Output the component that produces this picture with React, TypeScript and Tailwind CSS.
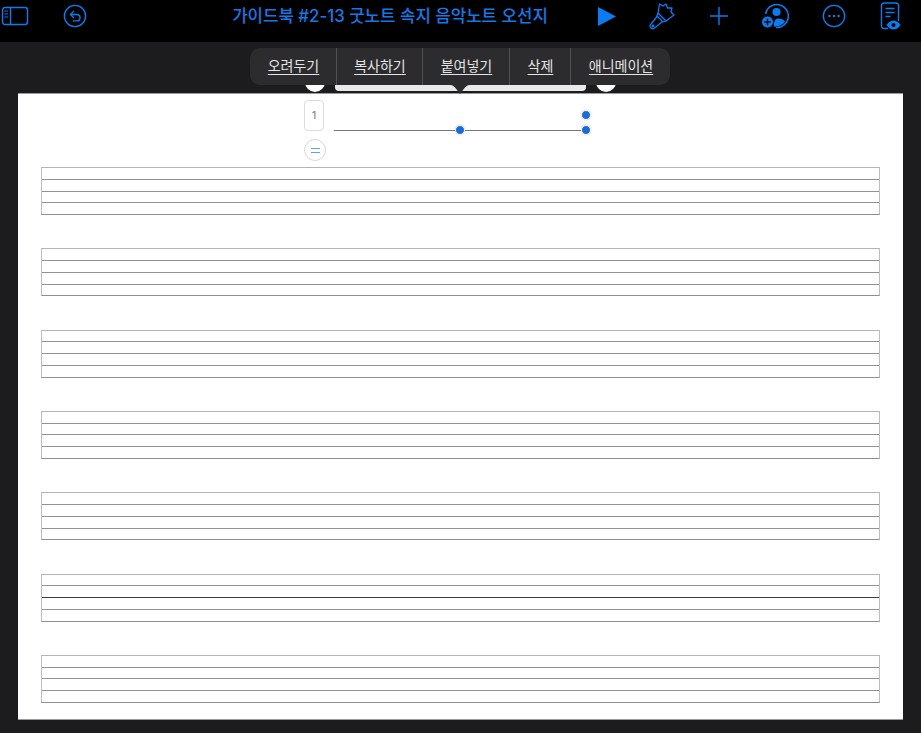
import React from "react";

const BLUE = "#0a7bf0";

const IconButton = ({ children, className = "" }: { children: React.ReactNode; className?: string }) => (
  <div className={`flex items-center justify-center ${className}`}>{children}</div>
);

const TopBar = () => (
  <div className="flex h-[42px] items-center bg-black pb-[10px] text-[#1479e6]">
    <IconButton className="ml-[1px] w-[28px]">
      <svg width="28" height="20" viewBox="0 0 28 20" fill="none" stroke={BLUE} strokeWidth="1.4">
        <rect x="1.5" y="1.5" width="25" height="17" rx="2.5" />
        <path d="M9.5 1.5v17" />
        <path d="M3.5 5h3.5M3.5 8h3.5M3.5 11h3.5" strokeWidth="1.2" />
      </svg>
    </IconButton>
    <IconButton className="ml-[34px] w-[24px]">
      <svg width="24" height="24" viewBox="0 0 24 24" fill="none" stroke={BLUE} strokeWidth="1.4">
        <circle cx="12" cy="12" r="10.6" />
        <path d="M10.5 7.5 7.500 10.500l3 3" strokeLinecap="round" strokeLinejoin="round" />
        <path d="M7.800 10.500h6a3.200 3.200 0 0 1 0 6.400h-3.600" strokeLinecap="round" />
      </svg>
    </IconButton>
    <div className="ml-[138px] w-[330px] whitespace-nowrap text-center text-[16.8px] font-medium leading-none text-[#1479e6]">
      가이드북 #2-13 굿노트 속지 음악노트 오선지
    </div>
    <IconButton className="ml-[43px] w-[18px]">
      <svg width="18" height="19" viewBox="0 0 18 19" fill={BLUE}>
        <path d="M0 0 18 9.500 0 19z" />
      </svg>
    </IconButton>
    <IconButton className="ml-[33px] w-[26px]">
      <svg width="26" height="28" viewBox="0 0 26 28" fill="none" stroke={BLUE} strokeWidth="1.3" strokeLinejoin="round">
        <path d="M10.500 2 14 4l3-2 1.500 4H23l-1 4 3 3-8 6-8-8z" />
        <path d="M9 11l-1 3 6 6 3-1" />
        <path d="M8.500 14 2 22a2.400 2.400 0 0 0 3.500 4l8-6.500" />
        <circle cx="4" cy="24" r="0.800" />
      </svg>
    </IconButton>
    <IconButton className="ml-[34px] w-[20px]">
      <svg width="20" height="20" viewBox="0 0 20 20" stroke={BLUE} strokeWidth="1.4">
        <path d="M10 1v18M1 10h18" />
      </svg>
    </IconButton>
    <IconButton className="ml-[32px] w-[28px]">
      <svg width="28" height="26" viewBox="0 0 28 26" fill="none">
        <path d="M4.500 11A11.500 11.500 0 1 1 15 24.500" stroke={BLUE} strokeWidth="1.500" />
        <circle cx="15.500" cy="9" r="4" fill={BLUE} />
        <path d="M13 23.800c-.5-4 .500-8 4-8.200 3.500 0 5.500 1 7 3-1.800 2.800-5 5-11 5.200z" fill={BLUE} />
        <circle cx="6.500" cy="19" r="6" fill={BLUE} stroke="#000" strokeWidth="1" />
        <path d="M6.500 15.800v6.400M3.300 19h6.400" stroke="#000" strokeWidth="1.400" />
      </svg>
    </IconButton>
    <IconButton className="ml-[33px] w-[24px]">
      <svg width="24" height="24" viewBox="0 0 24 24" fill="none">
        <circle cx="12" cy="12" r="10.700" stroke={BLUE} strokeWidth="1.300" />
        <circle cx="7.400" cy="12" r="1.200" fill={BLUE} />
        <circle cx="12" cy="12" r="1.200" fill={BLUE} />
        <circle cx="16.600" cy="12" r="1.200" fill={BLUE} />
      </svg>
    </IconButton>
    <IconButton className="ml-[34px] w-[24px]">
      <svg width="24" height="28" viewBox="0 0 24 28" fill="none">
        <path d="M8 26.500H4A2.500 2.500 0 0 1 1.500 24V3.500A2.500 2.500 0 0 1 4 1h12a2.500 2.500 0 0 1 2.500 2.500V19" stroke={BLUE} strokeWidth="1.400" />
        <path d="M5.500 6.500h9M5.500 10.500h9M5.500 14.500h5" stroke={BLUE} strokeWidth="1.300" />
        <path d="M6.500 23c2-3 4.500-4.500 7-4.500s5 1.500 7 4.500c-2 3-4.500 4.500-7 4.500s-5-1.500-7-4.500z" fill={BLUE} />
        <circle cx="13.500" cy="23" r="2" fill="#000" />
      </svg>
    </IconButton>
  </div>
);

const menuItems = [
  { label: "오려두기", width: "w-[87px]" },
  { label: "복사하기", width: "w-[86px]" },
  { label: "붙여넣기", width: "w-[87px]" },
  { label: "삭제", width: "w-[61px]" },
  { label: "애니메이션", width: "w-[99px]" },
];

const Popover = () => (
  <div className="absolute left-[250px] top-[48px] z-20">
    <div className="flex h-[37px] w-[420px] items-center rounded-[10px] bg-[#2c2c2e]">
      {menuItems.map((item, index) => (
        <div
          key={item.label}
          className={`flex h-full items-center justify-center border-[#505052] pb-[2px] pl-[1px] text-[14px] leading-none text-[#e4e4e4] underline underline-offset-[3px] ${item.width} ${
            index < menuItems.length - 1 ? "border-r" : ""
          }`}
        >
          {item.label}
        </div>
      ))}
    </div>
  </div>
);

// selection peeking out from under the popover
const SelectionBits = () => (
  <>
    <div className="absolute left-[305px] top-[72px] z-10 h-[20px] w-[20px] rounded-full bg-white" />
    <div className="absolute left-[596px] top-[72px] z-10 h-[20px] w-[20px] rounded-full bg-white" />
    <div className="absolute left-[335px] top-[80px] z-10 h-[10.500px] w-[251px] rounded-b-[4px] bg-[#e9e9e9]" />
    <svg className="absolute left-[448px] top-[85px] z-30" width="24" height="10" viewBox="0 0 24 10">
      <path d="M1 0h22l-1 0c-3 0-5 2-7 5l-3 4-3-4C7 2 5 0 2 0z" fill="#2c2c2e" />
    </svg>
  </>
);

const Dot = ({ x, y }: { x: number; y: number }) => (
  <div
    className="absolute h-[10px] w-[10px] rounded-full border border-white bg-[#1a6ad8] shadow-[0_0_2px_rgba(0,0,0,0.2)]"
    style={{ left: x - 5, top: y - 5 }}
  />
);

const Staff = ({ darkLine = false }: { darkLine?: boolean }) => (
  <div className="flex h-[48px] flex-col border border-t-[#b4b4b4] border-x-[#bdbdbd] border-b-[#8f8f8f]">
    {[0, 1, 2, 3].map((i) => (
      <div
        key={i}
        className={`flex-1 ${i < 3 ? "border-b" : ""} ${darkLine && i === 1 ? "border-[#3e3e3e]" : "border-[#939393]"}`}
      />
    ))}
  </div>
);

const Page = () => (
  <div className="relative mx-[18px] mt-[52px] h-[625px] w-[885px] bg-white px-[23px] pt-[73px] shadow-[0_-1px_0_#9a9a9a,0_1px_0_#9a9a9a]">
    <div className="absolute left-[286px] top-[6px] flex h-[31px] w-[20px] items-center justify-center rounded-[4px] border border-[#dcdcdc] bg-white text-[11px] font-medium text-[#8e8e8e]">
      1
    </div>
    <div className="absolute left-[286px] top-[45px] flex h-[22px] w-[22px] items-center justify-center rounded-full border border-[#d8d8d8] bg-white">
      <div className="h-[5px] w-[9px] border-y border-[#5aa6e0]" />
    </div>
    <div className="absolute left-[316px] top-[36px] h-[1px] w-[252px] bg-[#777777]" />
    <Dot x={442} y={36} />
    <Dot x={568} y={36} />
    <Dot x={568} y={21} />
    <div className="flex flex-col gap-[33.330px]">
      {[0, 1, 2, 3, 4, 5, 6].map((i) => (
        <Staff key={i} darkLine={i === 5} />
      ))}
    </div>
  </div>
);

export default function App() {
  return (
    <div className="relative h-[733px] w-[921px] overflow-hidden bg-[#1c1c1e] font-['Inter','Noto_Sans_CJK_KR','Noto_Sans',sans-serif]">
      <TopBar />
      <Page />
      <SelectionBits />
      <Popover />
    </div>
  );
}
